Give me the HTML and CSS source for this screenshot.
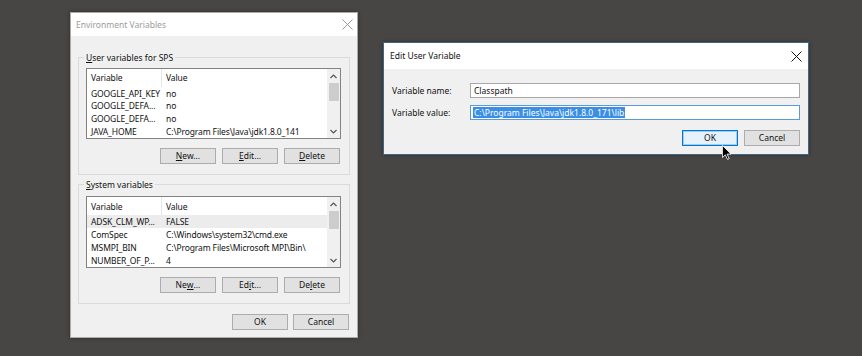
FILE: index.html
```html
<!DOCTYPE html>
<html>
<head>
<meta charset="utf-8">
<link rel="stylesheet" href="styles.css">
</head>
<body>
<div class="desktop">
  <div class="win env">
    <div class="titlebar inactive">
      <span class="title">Environment Variables</span>
      <svg class="close" width="11" height="11" viewBox="0 0 11 11"><path d="M0.5 0.5 L10.5 10.5 M10.5 0.5 L0.5 10.5" stroke="#9a9a9a" stroke-width="1" fill="none"/></svg>
    </div>
    <div class="envbody">
      <div class="group">
        <div class="glabel"><u>U</u>ser variables for SPS</div>
        <div class="list">
          <div class="cols">
            <div class="head"><span class="c1">Variable</span><span class="c2">Value</span></div>
            <div class="row"><span class="c1">GOOGLE_API_KEY</span><span class="c2">no</span></div>
            <div class="row"><span class="c1">GOOGLE_DEFA...</span><span class="c2">no</span></div>
            <div class="row"><span class="c1">GOOGLE_DEFA...</span><span class="c2">no</span></div>
            <div class="row"><span class="c1">JAVA_HOME</span><span class="c2">C:\Program Files\Java\jdk1.8.0_141</span></div>
          </div>
          <div class="sbar">
            <svg class="arr" width="7" height="5" viewBox="0 0 7 5"><path d="M0.5 4 L3.5 1 L6.5 4" stroke="#555" stroke-width="1.2" fill="none"/></svg>
            <div class="thumb"></div>
            <div class="track"></div>
            <svg class="arr" width="7" height="5" viewBox="0 0 7 5"><path d="M0.5 1 L3.5 4 L6.5 1" stroke="#555" stroke-width="1.2" fill="none"/></svg>
          </div>
        </div>
        <div class="btns">
          <div class="btn"><u>N</u>ew...</div>
          <div class="btn"><u>E</u>dit...</div>
          <div class="btn"><u>D</u>elete</div>
        </div>
      </div>
      <div class="group g2">
        <div class="glabel"><u>S</u>ystem variables</div>
        <div class="list">
          <div class="cols">
            <div class="head"><span class="c1">Variable</span><span class="c2">Value</span></div>
            <div class="row sel"><span class="c1">ADSK_CLM_WP...</span><span class="c2">FALSE</span></div>
            <div class="row"><span class="c1">ComSpec</span><span class="c2">C:\Windows\system32\cmd.exe</span></div>
            <div class="row"><span class="c1">MSMPI_BIN</span><span class="c2">C:\Program Files\Microsoft MPI\Bin\</span></div>
            <div class="row"><span class="c1">NUMBER_OF_P...</span><span class="c2">4</span></div>
          </div>
          <div class="sbar">
            <svg class="arr" width="7" height="5" viewBox="0 0 7 5"><path d="M0.5 4 L3.5 1 L6.5 4" stroke="#555" stroke-width="1.2" fill="none"/></svg>
            <div class="thumb"></div>
            <div class="track"></div>
            <svg class="arr" width="7" height="5" viewBox="0 0 7 5"><path d="M0.5 1 L3.5 4 L6.5 1" stroke="#555" stroke-width="1.2" fill="none"/></svg>
          </div>
        </div>
        <div class="btns">
          <div class="btn">Ne<u>w</u>...</div>
          <div class="btn">Ed<u>i</u>t...</div>
          <div class="btn">De<u>l</u>ete</div>
        </div>
      </div>
      <div class="btns main">
        <div class="btn">OK</div>
        <div class="btn">Cancel</div>
      </div>
    </div>
  </div>

  <div class="win edit">
    <div class="titlebar">
      <span class="title">Edit User Variable</span>
      <svg class="close" width="11" height="11" viewBox="0 0 11 11"><path d="M0.5 0.5 L10.5 10.5 M10.5 0.5 L0.5 10.5" stroke="#111" stroke-width="1" fill="none"/></svg>
    </div>
    <div class="editbody">
      <div class="field">
        <span class="flabel">Variable name:</span>
        <div class="input">Classpath</div>
      </div>
      <div class="field">
        <span class="flabel">Variable value:</span>
        <div class="input focus"><span class="selected">C:\Program Files\Java\jdk1.8.0_171\lib</span></div>
      </div>
      <div class="btns ebtns">
        <div class="btn default">OK</div>
        <div class="btn">Cancel</div>
      </div>
    </div>
  </div>
</div>
<svg class="cursor" width="10" height="15" viewBox="0 0 12 18"><path d="M0.5 0.5 L0.5 15 L4 11.7 L6.6 17.3 L8.6 16.4 L6.1 10.9 L10.8 10.9 Z" fill="#000" stroke="#fff" stroke-width="1"/></svg>
</body>
</html>
```

FILE: styles.css
```css
body {
  margin: 0;
  width: 862px;
  height: 356px;
  overflow: hidden;
  background: #474644;
  font-family: "Noto Sans", "Open Sans", sans-serif;
  font-size: 8.5px;
  color: #111;
  position: relative;
}
.desktop {
  display: flex;
  align-items: flex-start;
  padding: 12px 0 0 70px;
  gap: 25px;
}
.win {
  box-sizing: border-box;
  background: #f0f0f0;
  display: flex;
  flex-direction: column;
}
.env {
  width: 288px;
  height: 326px;
  border: 1px solid #aaaaaa;
  box-shadow: 0 0 4px rgba(0,0,0,0.35);
}
.edit {
  width: 426px;
  height: 113px;
  margin-top: 30px;
  border: 1px solid #3f6587;
  box-shadow: 0 0 4px rgba(0,0,0,0.35);
}
.titlebar {
  background: #fff;
  display: flex;
  align-items: center;
  justify-content: space-between;
  flex-shrink: 0;
}
.env .titlebar {
  height: 23px;
  padding: 0 4px 0 5px;
}
.edit .titlebar {
  height: 26px;
  padding: 0 6px 0 6px;
}
.title {
  font-size: 8.5px;
  line-height: 12px;
}
.inactive .title {
  color: #9b9b9b;
}
.envbody {
  padding: 21px 7px 0 7px;
  display: flex;
  flex-direction: column;
}
.group {
  border: 1px solid #dadada;
  padding: 0 8px 10px 7px;
  display: flex;
  flex-direction: column;
}
.g2 {
  margin-top: 9px;
}
.glabel {
  align-self: flex-start;
  margin: -6px 0 0 -2px;
  padding: 0 2px;
  height: 12px;
  line-height: 12px;
  background: #f0f0f0;
}
.list {
  margin-top: 4px;
  height: 71px;
  box-sizing: border-box;
  border: 1px solid #838383;
  background: #fff;
  display: flex;
}
.g2 .list { margin-top: 5px; height: 72px; }
.cols {
  flex: 1;
  display: flex;
  flex-direction: column;
  letter-spacing: -0.12px;
}
.head, .row {
  display: flex;
  align-items: center;
  white-space: nowrap;
}
.head {
  height: 18px;
}
.row {
  height: 13px;
}
.sel {
  background: #ececec;
}
.c1 {
  width: 75px;
  padding-left: 4px;
  box-sizing: border-box;
  flex-shrink: 0;
}
.c2 {
  padding-left: 4px;
}
.head .c1 {
  height: 100%;
  display: flex;
  align-items: center;
  border-right: 1px solid #e5e5e5;
}
.sbar {
  width: 13px;
  background: #f0f0f0;
  display: flex;
  flex-direction: column;
  align-items: center;
}
.arr {
  margin: 5px 0 4px;
  flex-shrink: 0;
}
.thumb {
  width: 10px;
  height: 18px;
  background: #cdcdcd;
}
.track {
  flex: 1;
}
.btns {
  display: flex;
  justify-content: flex-end;
  gap: 6px;
  margin-top: 9px;
  padding-right: 1px;
}
.btn {
  width: 56px;
  height: 16px;
  box-sizing: border-box;
  background: #e1e1e1;
  border: 1px solid #adadad;
  display: flex;
  align-items: center;
  justify-content: center;
  line-height: 12px;
}
.main {
  margin-top: 10px;
  gap: 5px;
}
.editbody {
  padding: 14px 8px 0 8px;
  display: flex;
  flex-direction: column;
}
.field {
  display: flex;
  align-items: center;
  margin-bottom: 7px;
}
.flabel {
  width: 78px;
  flex-shrink: 0;
}
.input {
  flex: 1;
  height: 15px;
  box-sizing: border-box;
  border: 1px solid #a8a8a8;
  background: #fff;
  display: flex;
  align-items: center;
  padding-left: 3px;
  white-space: nowrap;
}
.input.focus {
  border-color: #5b9bd5;
  padding-left: 2px;
}
.selected {
  background: #3a8ee6;
  color: #fff;
  line-height: 11px;
  padding: 0 1px;
}
.ebtns {
  margin-top: 3px;
  padding-right: 0;
}
.btn.default {
  background: #e5f1fb;
  border: 1px solid #0078d7;
  box-shadow: inset 0 0 0 1px #9fcdf0;
}
.cursor {
  position: absolute;
  left: 722px;
  top: 145px;
}
```
